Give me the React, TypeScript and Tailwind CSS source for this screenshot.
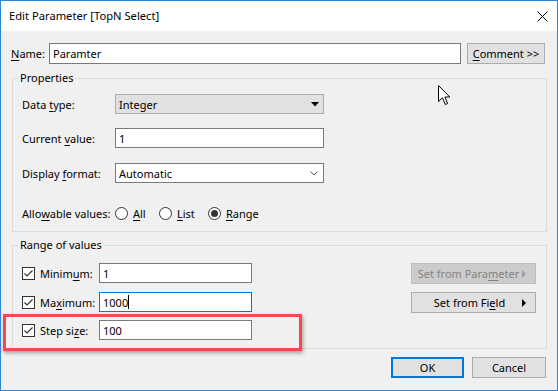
import type { ReactNode } from 'react';

const U = ({ children }: { children: ReactNode }) => (
    <span className="underline decoration-1 underline-offset-[2px]">{children}</span>
);

const Radio = ({ checked, children, w }: { checked?: boolean; children: ReactNode; w: string }) => (
    <div className={`flex items-center gap-[5px] ${w}`}>
        <span className="w-[13px] h-[13px] rounded-full border border-[#333] bg-white flex items-center justify-center shrink-0">
            {checked && <span className="w-[7px] h-[7px] rounded-full bg-[#333]" />}
        </span>
        <span>{children}</span>
    </div>
);

const Check = () => (
    <span className="w-[13px] h-[13px] border border-[#333] bg-white shrink-0 flex items-center justify-center">
        <svg width="11" height="11" viewBox="0 0 11 11">
            <path d="M1.5 5.5 L4 8 L9.5 2.5" fill="none" stroke="#333" strokeWidth="1.2" />
        </svg>
    </span>
);

const RangeRow = ({ label, value, focused, className = '' }: { label: ReactNode; value: string; focused?: boolean; className?: string }) => (
    <div className={`h-[20px] flex items-center ${className}`}>
        <Check />
        <span className="ml-[5px] w-[59px]">{label}</span>
        <div className={`w-[153px] h-[20px] bg-white border ${focused ? 'border-[#0078d7]' : 'border-[#7a7a7a]'} flex items-center pl-[3px]`}>
            {value}
            {focused && <span className="w-px h-[14px] bg-black" />}
        </div>
    </div>
);

export default function App() {
    return (
        <div className="relative w-[558px] h-[391px] border border-[#2b86d6] bg-[#f0f0f0] flex flex-col text-[11px] leading-none whitespace-nowrap text-black font-['Noto_Sans',sans-serif] overflow-hidden">
            {/* Title bar */}
            <div className="h-[30px] shrink-0 bg-white flex items-center justify-between pl-[8px] pr-[9px]">
                <span className="text-[11.2px]">Edit Parameter [TopN Select]</span>
                <svg width="11" height="11" viewBox="0 0 11 11">
                    <path d="M0.5 0.5 L10.5 10.5 M10.5 0.5 L0.5 10.5" stroke="#000" strokeWidth="1" />
                </svg>
            </div>

            <div className="flex flex-col pl-[10px]">
                {/* Name */}
                <div className="mt-[12px] h-[21px] flex items-center">
                    <span className="w-[38px]"><U>N</U>ame:</span>
                    <div className="w-[412px] h-[21px] bg-white border border-[#7a7a7a] flex items-center pl-[3px]">Paramter</div>
                    <button className="ml-[6px] w-[78px] h-[21px] bg-[#e1e1e1] border border-[#adadad] flex items-center justify-center">
                        <span><U>C</U>omment &gt;&gt;</span>
                    </button>
                </div>

                {/* Properties */}
                <fieldset className="ml-[1px] mt-[6px] w-[535px] border border-[#dcdcdc]">
                    <legend className="ml-[5px] px-[2px] leading-[16px]">Properties</legend>
                    <div className="flex flex-col pl-[9px] pt-[8px] pb-[8px]">
                        <div className="h-[20px] flex items-center">
                            <span className="w-[93px]">Data <U>t</U>ype:</span>
                            <div className="w-[209px] h-[20px] bg-[#e1e1e1] border border-[#adadad] flex items-center justify-between pl-[3px] pr-[4px]">
                                <span>Integer</span>
                                <svg width="8" height="5" viewBox="0 0 8 5"><path d="M0 0 H8 L4 4.5 Z" fill="#000" /></svg>
                            </div>
                        </div>
                        <div className="mt-[14px] h-[20px] flex items-center">
                            <span className="w-[93px]">Current <U>v</U>alue:</span>
                            <div className="w-[209px] h-[20px] bg-white border border-[#7a7a7a] flex items-center pl-[3px]">1</div>
                        </div>
                        <div className="mt-[15px] h-[20px] flex items-center">
                            <span className="w-[93px]">Display <U>f</U>ormat:</span>
                            <div className="w-[209px] h-[20px] bg-white border border-[#7a7a7a] flex items-center justify-between pl-[3px] pr-[5px]">
                                <span>Automatic</span>
                                <svg width="8" height="5" viewBox="0 0 8 5"><path d="M0.5 0.5 L4 4 L7.5 0.5" fill="none" stroke="#555" strokeWidth="1" /></svg>
                            </div>
                        </div>
                        <div className="mt-[20px] h-[20px] flex items-center">
                            <span className="w-[93px]">Allo<U>w</U>able values:</span>
                            <Radio w="w-[44px]"><U>A</U>ll</Radio>
                            <Radio w="w-[49px]"><U>L</U>ist</Radio>
                            <Radio w="w-[60px]" checked><U>R</U>ange</Radio>
                        </div>
                    </div>
                </fieldset>

                {/* Range of values */}
                <fieldset className="ml-[1px] mt-[5px] w-[535px] border border-[#dcdcdc]">
                    <legend className="ml-[5px] px-[2px] leading-[16px]">Range of values</legend>
                    <div className="flex justify-between pl-[9px] pr-[10px] pt-[10px] pb-[8px]">
                        <div className="flex flex-col">
                            <RangeRow label={<>Minim<U>u</U>m:</>} value="1" />
                            <RangeRow className="mt-[9px]" label={<>Ma<U>x</U>imum:</>} value="1000" focused />
                            <RangeRow className="mt-[8px]" label={<>Step si<U>z</U>e:</>} value="100" />
                        </div>
                        <div className="flex flex-col">
                            <button className="w-[125px] h-[21px] bg-[#cccccc] border border-[#bfbfbf] text-[#838383] flex items-center pl-[3px] pr-[9px]">
                                <span className="flex-1 text-center">Set from Para<U>m</U>eter</span>
                                <svg width="4" height="8" viewBox="0 0 4 8"><path d="M0 0 L4 4 L0 8 Z" fill="#a0a0a0" /></svg>
                            </button>
                            <button className="mt-[8px] w-[125px] h-[21px] bg-[#e1e1e1] border border-[#adadad] flex items-center pl-[5px] pr-[9px]">
                                <span className="flex-1 text-center">Set from Fi<U>e</U>ld</span>
                                <svg width="4" height="8" viewBox="0 0 4 8"><path d="M0 0 L4 4 L0 8 Z" fill="#000" /></svg>
                            </button>
                        </div>
                    </div>
                </fieldset>

                {/* Dialog buttons */}
                <div className="ml-[1px] mt-[8px] w-[534px] flex justify-end gap-[8px]">
                    <button className="w-[73px] h-[21px] bg-[#e1e1e1] border-2 border-[#0078d7] flex items-center justify-center">OK</button>
                    <button className="w-[74px] h-[21px] bg-[#e1e1e1] border border-[#adadad] flex items-center justify-center">Cancel</button>
                </div>
            </div>

            {/* Annotation highlight */}
            <div className="absolute left-[2px] top-[313px] w-[299px] h-[37px] border-[3px] border-[#f24a4d] shadow-[1px_2px_4px_rgba(0,0,0,0.35)]" />

            {/* Mouse cursor */}
            <svg className="absolute left-[437px] top-[84px]" width="13" height="21" viewBox="0 0 13 21">
                <path d="M0.5 0.5 L0.5 16.5 L4.5 12.8 L7.3 19.5 L9.6 18.5 L6.9 12 L11.8 12 Z" fill="#fff" stroke="#000" strokeWidth="1" strokeLinejoin="round" />
            </svg>
        </div>
    );
}
